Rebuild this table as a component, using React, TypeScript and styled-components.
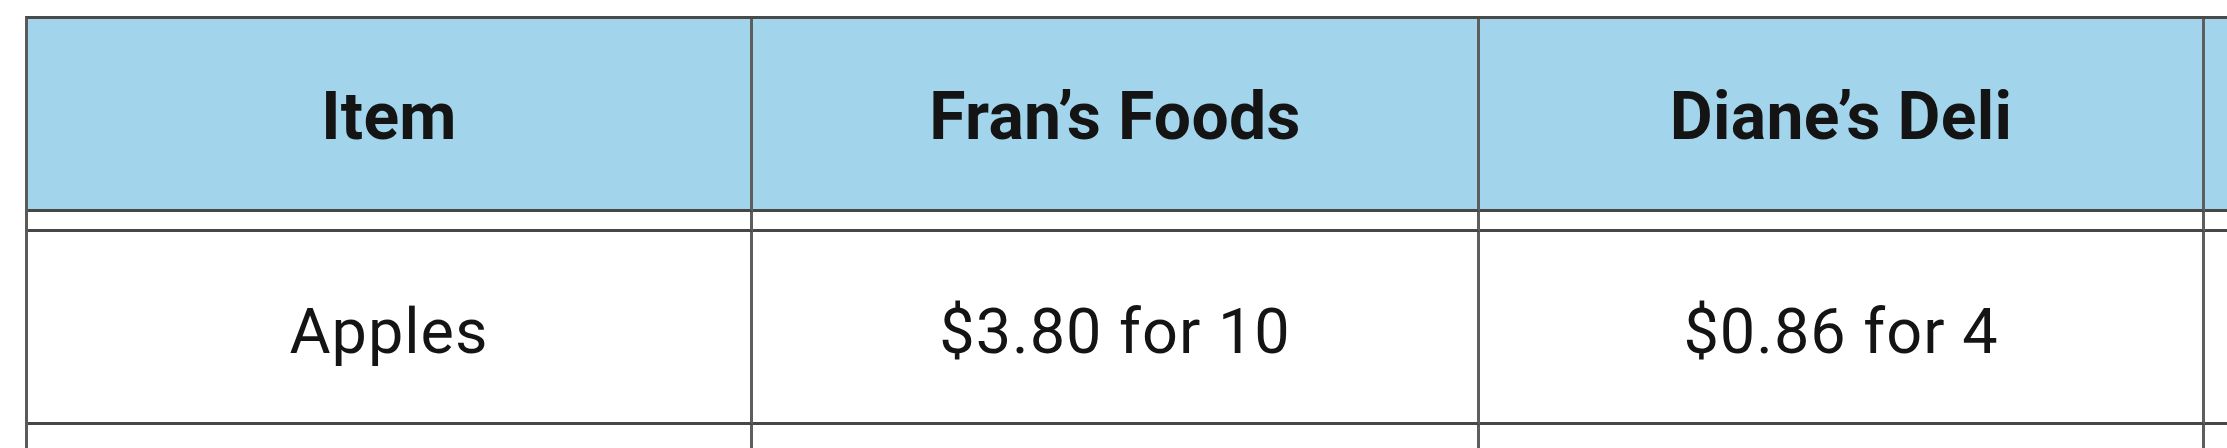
import React from 'react';
import styled, { createGlobalStyle } from 'styled-components';

const GlobalStyle = createGlobalStyle`
  html, body {
    margin: 0;
    padding: 0;
    background: #ffffff;
    overflow: hidden;
  }
`;

const Page = styled.div`
  padding: 16px 0 0 25px;
  width: max-content;
  font-family: Roboto, 'Liberation Sans', sans-serif;
  color: #141414;
`;

const Grid = styled.div`
  display: grid;
  grid-template-columns: 725px 727px 725px 725px;
  border-top: 3px solid #4a4a4a;
  border-left: 3px solid #5a5a5a;
`;

const Cell = styled.div<{ $head?: boolean; $height: number }>`
  box-sizing: border-box;
  height: ${(p) => p.$height}px;
  display: flex;
  align-items: center;
  justify-content: center;
  padding-top: ${(p) => (p.$height < 50 ? 0 : p.$head ? 5 : 8)}px;
  background: ${(p) => (p.$head ? '#a2d4eb' : '#ffffff')};
  border-right: 3px solid #5e5e5e;
  border-bottom: 3px solid #474747;
  font-size: ${(p) => (p.$head ? '66px' : '63px')};
  font-weight: ${(p) => (p.$head ? 700 : 400)};
  letter-spacing: ${(p) => (p.$head ? '0.3px' : '1px')};
  white-space: nowrap;
`;

const headers = ['Item', 'Fran’s Foods', 'Diane’s Deli', ''];
const rows = [
  ['Apples', '$3.80 for 10', '$0.86 for 4', ''],
  ['', '', '', ''],
];

export default function App() {
  return (
    <>
      <GlobalStyle />
      <Page>
        <Grid>
          {headers.map((h, i) => (
            <Cell key={`h${i}`} $head $height={193}>{h}</Cell>
          ))}
          {headers.map((_, i) => (
            <Cell key={`s${i}`} $height={20} />
          ))}
          {rows.map((row, r) =>
            row.map((c, i) => (
              <Cell key={`r${r}-${i}`} $height={193}>{c}</Cell>
            ))
          )}
        </Grid>
      </Page>
    </>
  );
}
